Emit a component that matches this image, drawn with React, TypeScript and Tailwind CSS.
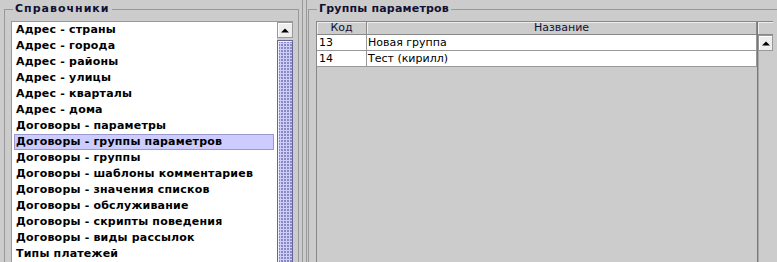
import React from 'react';

const items = [
  'Адрес - страны',
  'Адрес - города',
  'Адрес - районы',
  'Адрес - улицы',
  'Адрес - кварталы',
  'Адрес - дома',
  'Договоры - параметры',
  'Договоры - группы параметров',
  'Договоры - группы',
  'Договоры - шаблоны комментариев',
  'Договоры - значения списков',
  'Договоры - обслуживание',
  'Договоры - скрипты поведения',
  'Договоры - виды рассылок',
  'Типы платежей',
];

const rows = [
  { code: '13', name: 'Новая группа' },
  { code: '14', name: 'Тест (кирилл)' },
];

function UpButton() {
  return (
    <div className="h-[16px] w-full shrink-0 bg-[#eeeeee] border border-[#999999] shadow-[inset_1px_1px_0_#ffffff] flex items-center justify-center">
      <svg width="8" height="5" viewBox="0 0 8 5">
        <path d="M0 4.5 L4 0.5 L8 4.5 Z" fill="#000000" />
      </svg>
    </div>
  );
}

export default function App() {
  const selected = 7;

  return (
    <div className="w-[777px] h-[262px] overflow-hidden bg-[#cccccc] flex pl-[4px] font-['DejaVu_Sans',sans-serif] text-[11px]">
      {/* left: list of dictionaries */}
      <fieldset className="w-[295px] shrink-0 h-[300px] mt-[2px] border border-[#999999] px-[6px] pt-[5px] pb-0 min-w-0">
        <legend className="ml-[2px] px-[2px] font-bold leading-[14px] tracking-[1px] text-[#111133]">Справочники</legend>
        <div className="flex h-[280px] border-l border-t border-[#999999] mr-[-1px]">
          <div className="flex-1 bg-white pl-[2px] pr-[3px]">
            {items.map((item, i) => (
              <div
                key={item}
                className={
                  i === selected
                    ? 'h-[16px] leading-[14px] pl-[1px] font-bold tracking-[0.2px] text-black bg-[#ccccff] border border-[#9999cc]'
                    : 'h-[16px] leading-[16px] pl-[2px] font-bold tracking-[0.2px] text-black'
                }
              >
                {item}
              </div>
            ))}
          </div>
          <div className="w-[16px] shrink-0 flex flex-col">
            <UpButton />
            <div className="mt-[2px] flex-1 border border-[#666699] bg-[#ccccff] bg-[radial-gradient(circle_at_1px_1px,#8888bb_0.7px,transparent_1px)] [background-size:3px_3px] shadow-[inset_1px_1px_0_#eeeeff]" />
          </div>
        </div>
      </fieldset>

      {/* splitter */}
      <div className="w-[9px] shrink-0 pl-[3px]">
        <div className="w-[5px] h-full border-l border-r border-[#999999]" />
      </div>

      {/* right: parameter groups table */}
      <fieldset className="w-[480px] shrink-0 h-[300px] mt-[2px] border border-[#999999] px-[7px] pt-[5px] pb-0 min-w-0">
        <legend className="ml-[1px] px-[2px] font-bold leading-[14px] tracking-[0.2px] text-[#111133]">Группы параметров</legend>
        <div className="flex h-[280px] w-[457px] border-l border-t border-[#888888]">
          <div className="w-[440px] shrink-0 flex flex-col">
            <div className="flex h-[13px] bg-[#cccccc] border-b border-[#888888] leading-[12px] text-[#111133]">
              <div className="w-[50px] text-center border-r border-[#888888] shadow-[inset_1px_1px_0_#eeeeee]">Код</div>
              <div className="flex-1 text-center border-r border-[#888888] shadow-[inset_1px_1px_0_#eeeeee]">Название</div>
            </div>
            {rows.map((r) => (
              <div key={r.code} className="flex h-[16px] bg-white border-b border-[#999999] leading-[15px] text-black">
                <div className="w-[50px] pl-[2px] border-r border-[#999999]">{r.code}</div>
                <div className="flex-1 pl-[1px] border-r border-[#999999]">{r.name}</div>
              </div>
            ))}
            <div className="flex-1 bg-[#cccccc]" />
          </div>
          <div className="w-[16px] shrink-0 flex flex-col border-l border-[#777777]">
            <div className="h-[13px] border-b border-[#888888] shadow-[inset_1px_1px_0_#eeeeee]" />
            <UpButton />
            <div className="flex-1 bg-[#cccccc] border-l border-[#aaaaaa]" />
          </div>
        </div>
      </fieldset>
    </div>
  );
}
